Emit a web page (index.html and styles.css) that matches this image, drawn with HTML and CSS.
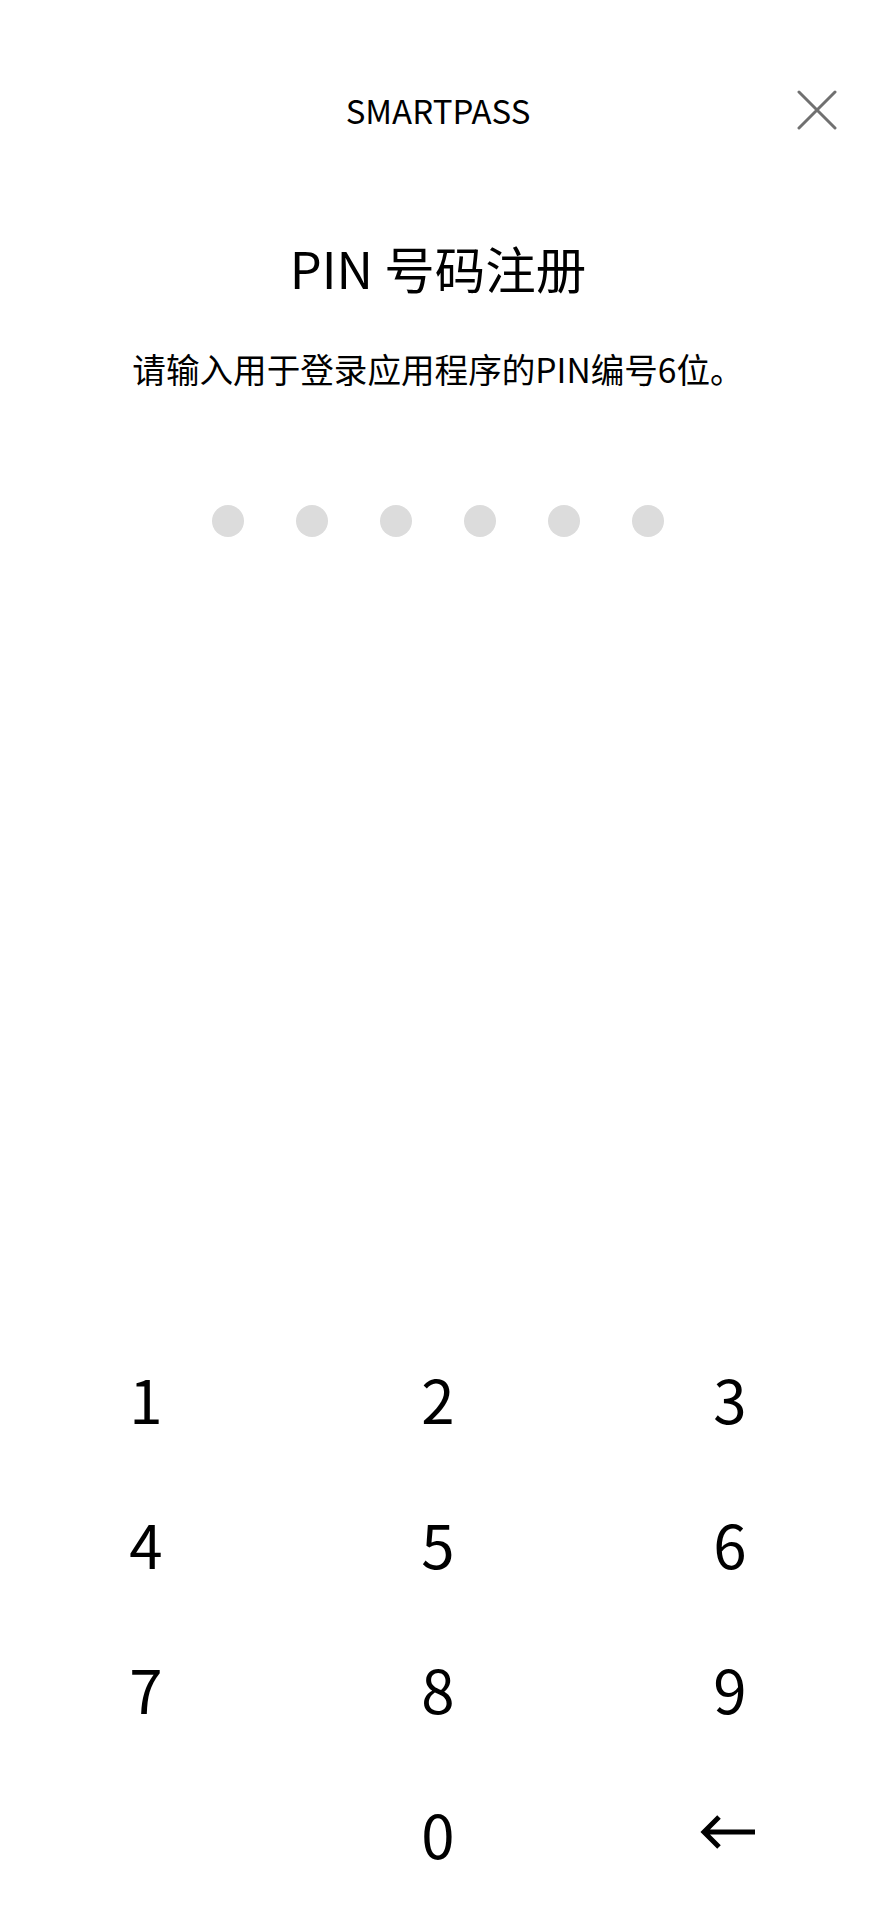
FILE: index.html
```html
<!DOCTYPE html>
<html lang="zh-CN">
<head>
  <meta charset="UTF-8" />
  <meta name="viewport" content="width=device-width, initial-scale=1.0" />
  <title>SMARTPASS PIN 号码注册</title>
  <link rel="stylesheet" href="styles.css">
</head>
<body>
  <header class="topbar">
    <span class="topbar-side"></span>
    <h1 class="brand">SMARTPASS</h1>
    <span class="topbar-side topbar-right">
      <button class="close-btn" type="button" aria-label="关闭">
        <svg width="40" height="40" viewBox="0 0 40 40" aria-hidden="true">
          <path d="M2 2 L38 38 M38 2 L2 38" />
        </svg>
      </button>
    </span>
  </header>
  <main class="pin-page">
    <h2 class="pin-title">PIN 号码注册</h2>
    <p class="pin-desc">请输入用于登录应用程序的PIN编号6位。</p>
    <div class="pin-dots" aria-label="已输入 0 位">
      <span class="dot"></span>
      <span class="dot"></span>
      <span class="dot"></span>
      <span class="dot"></span>
      <span class="dot"></span>
      <span class="dot"></span>
    </div>
  </main>
  <section class="keypad">
    <button type="button" class="key">1</button>
    <button type="button" class="key">2</button>
    <button type="button" class="key">3</button>
    <button type="button" class="key">4</button>
    <button type="button" class="key">5</button>
    <button type="button" class="key">6</button>
    <button type="button" class="key">7</button>
    <button type="button" class="key">8</button>
    <button type="button" class="key">9</button>
    <span class="key key-empty"></span>
    <button type="button" class="key">0</button>
    <button type="button" class="key key-back" aria-label="删除">
      <svg width="56" height="34" viewBox="0 0 56 34" aria-hidden="true">
        <path d="M55 17 H4 M19 2 L4 17 L19 32" />
      </svg>
    </button>
  </section>
</body>
</html>
```

FILE: styles.css
```css
:root {
  --text: #000;
  --dot: #dcdcdc;
  --icon: #707070;
  --font: 'Noto Sans CJK SC', 'Noto Sans', sans-serif;
}
html, body {
  margin: 0;
  padding: 0;
  background: #fff;
  font-family: var(--font);
  color: var(--text);
}
body {
  min-height: 1922px;
  display: flex;
  flex-direction: column;
}
.topbar {
  display: grid;
  grid-template-columns: 1fr auto 1fr;
  align-items: center;
  height: 80px;
  padding-top: 70px;
}
.brand {
  margin: 0;
  font-size: 33px;
  line-height: 40px;
  font-weight: 400;
}
.topbar-right {
  display: flex;
  justify-content: flex-end;
  padding-right: 39px;
}
.close-btn {
  padding: 0;
  border: none;
  background: none;
  width: 40px;
  height: 40px;
  cursor: pointer;
}
.close-btn svg {
  display: block;
}
.close-btn path {
  fill: none;
  stroke: var(--icon);
  stroke-width: 3;
  stroke-linecap: round;
}
.pin-page {
  display: flex;
  flex-direction: column;
  align-items: center;
}
.pin-title {
  margin: 85px 0 0 0;
  font-size: 50.5px;
  line-height: 64px;
  font-weight: 400;
}
.pin-desc {
  margin: 48px 0 0 0;
  font-size: 33.6px;
  line-height: 44px;
}
.pin-dots {
  display: flex;
  gap: 52px;
  margin-top: 114px;
}
.dot {
  width: 32px;
  height: 32px;
  border-radius: 50%;
  background: var(--dot);
}
/* teclado */
.keypad {
  margin-top: auto;
  display: grid;
  grid-template-columns: repeat(3, 1fr);
  grid-auto-rows: 145px;
  padding-bottom: 17px;
}
.key {
  padding: 0;
  border: none;
  background: none;
  font-family: var(--font);
  font-size: 60px;
  line-height: 145px;
  color: var(--text);
  cursor: pointer;
}
.key-back {
  display: flex;
  align-items: center;
  justify-content: center;
  padding: 0 4px 2px 0;
}
.key-back path {
  fill: none;
  stroke: var(--text);
  stroke-width: 5;
}
```
